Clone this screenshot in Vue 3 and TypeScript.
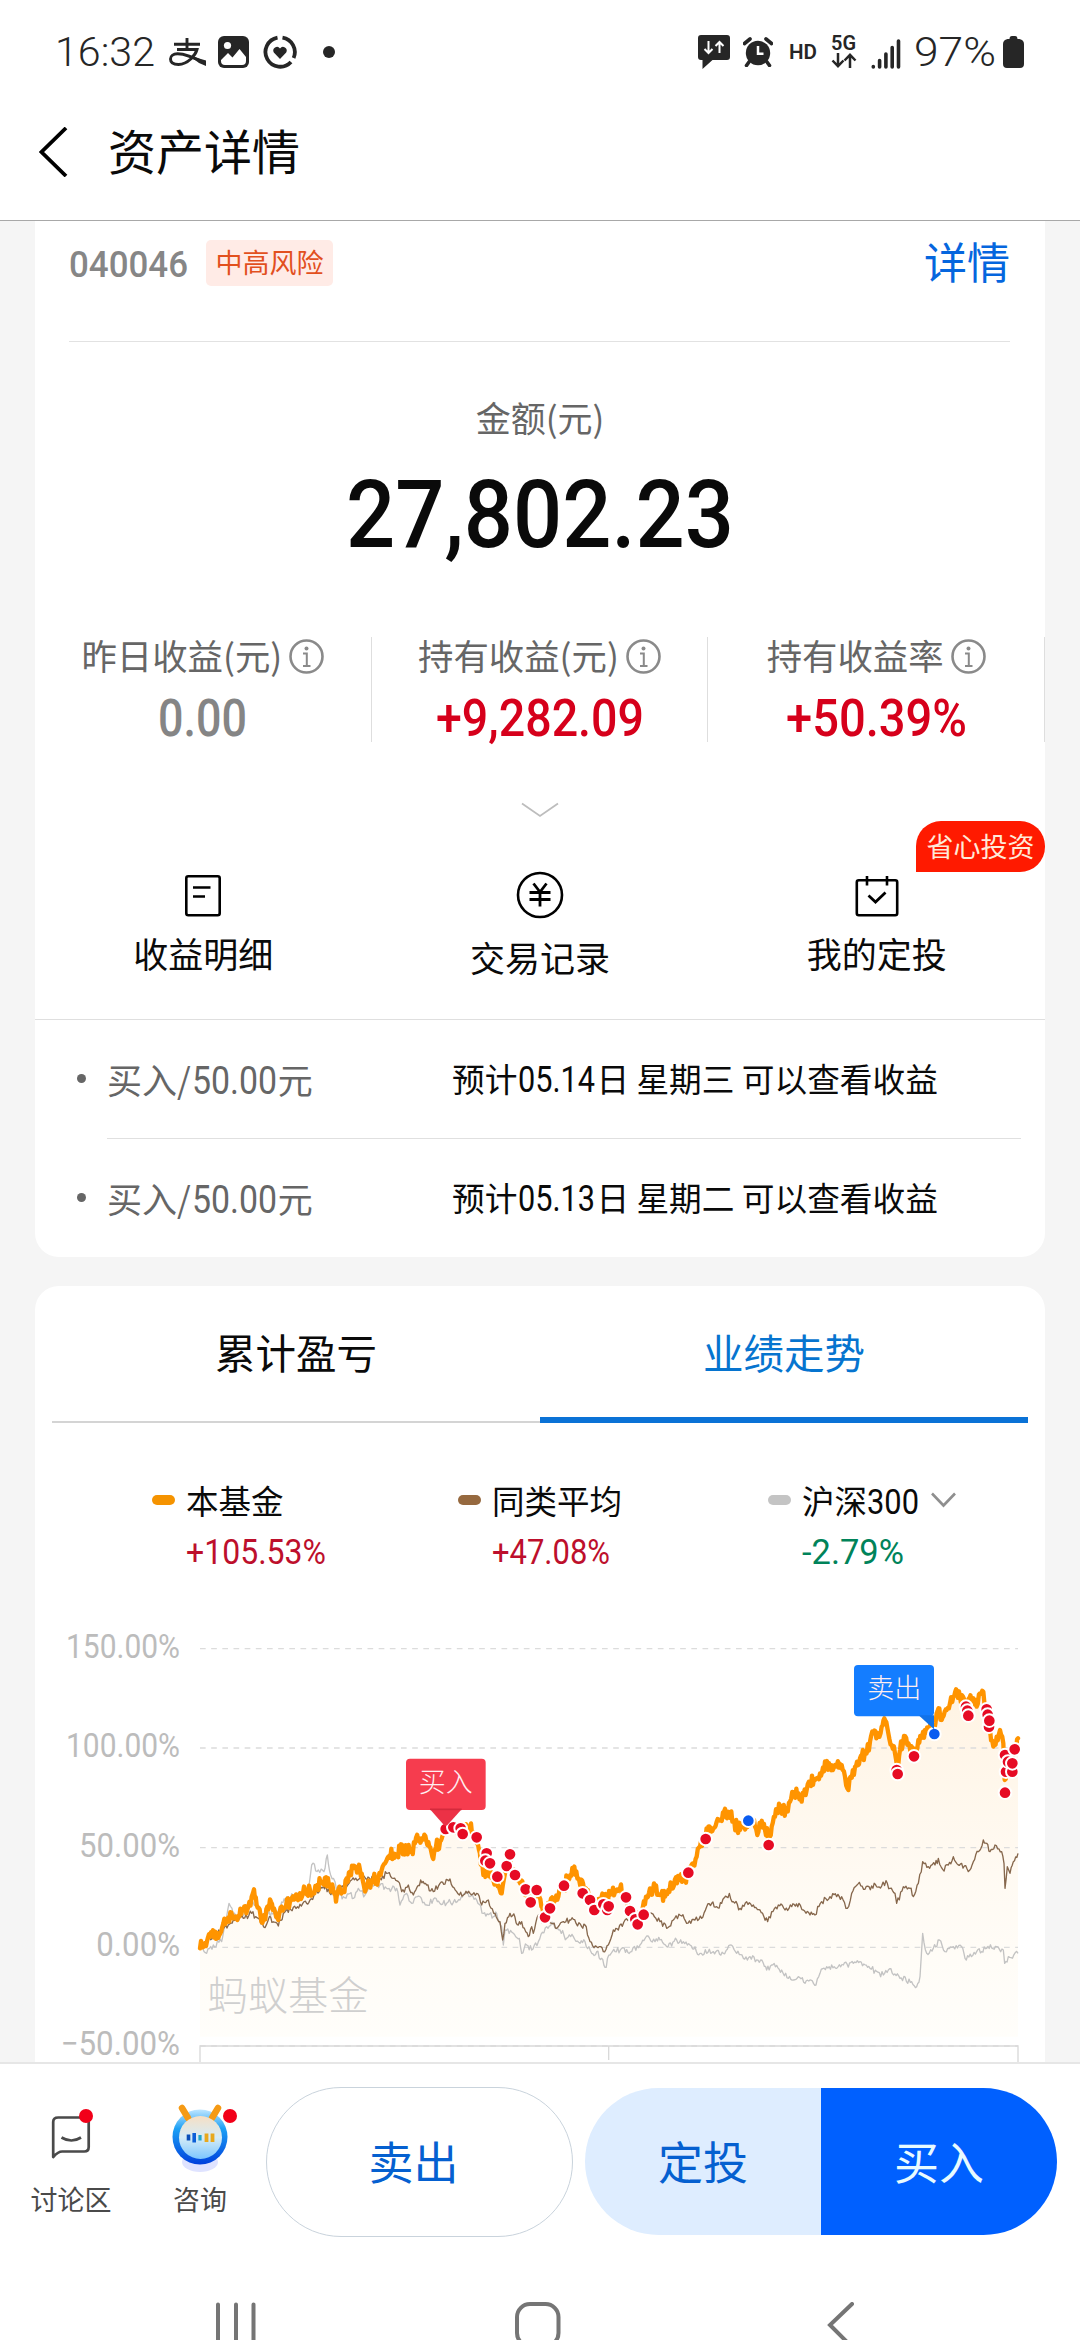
<script setup lang="ts">
import { h, type FunctionalComponent } from 'vue'

interface NumProps {
  v: string
  w: number
  cap: number
  weight?: number
}

/* Narrow figures: `cap` is the digit height, `w` the run width; the box bottom is the baseline. */
const Num: FunctionalComponent<NumProps> = (p) =>
  h('svg', { width: p.w, height: p.cap, style: 'overflow:visible;flex:none' }, [
    h(
      'text',
      {
        x: 0,
        y: p.cap,
        textLength: p.w,
        lengthAdjust: 'spacingAndGlyphs',
        'font-size': p.cap / 0.711,
        'font-weight': p.weight ?? 400,
        'font-family': 'Roboto, sans-serif',
        fill: 'currentColor',
      },
      p.v,
    ),
  ])
Num.props = ['v', 'w', 'cap', 'weight']

const stats = [
  { label: '昨日收益(元)', v: '0.00', w: 89, cls: 'flat' },
  { label: '持有收益(元)', v: '+9,282.09', w: 208, cls: 'up' },
  { label: '持有收益率', v: '+50.39%', w: 181, cls: 'up' },
]

const orders = [
  { date: '05.14', day: '星期三' },
  { date: '05.13', day: '星期二' },
]

const legend = [
  { name: '本基金', color: '#f59300', v: '+105.53%', w: 140, cls: 'lup' },
  { name: '同类平均', color: '#96693f', v: '+47.08%', w: 118, cls: 'lup' },
  { name: '沪深', num: '300', color: '#c4c4c4', v: '-2.79%', w: 102, cls: 'ldown' },
]

const axis = [
  { t: '150.00%', y: 56, w: 342 },
  { t: '100.00%', y: 354, w: 342 },
  { t: '50.00%', y: 653, w: 303 },
  { t: '0.00%', y: 952, w: 251 },
  { t: '−50.00%', y: 1248, w: 358 },
]

/* Chart units are thirds of a pixel. */
const fund =
  '60,955 75,940 90,920 105,905 118,915 130,880 145,862 160,865 175,858 190,840 205,830 215,800 222,778 230,825 242,860 250,870 262,830 270,808 282,835 295,870 305,830 318,828 330,815 345,805 360,790 375,785 390,780 400,788 412,765 425,755 438,742 447,770 460,780 468,815 478,770 490,780 500,745 510,725 525,715 540,720 548,750 555,785 562,765 580,750 595,745 605,720 615,700 625,680 640,670 652,675 660,660 680,655 695,660 705,640 718,625 730,628 742,645 757,680 768,650 780,635 788,615 795,590 815,590 840,600 870,590 885,620 897,660 905,700 910,735 925,720 940,750 950,745 965,790 975,730 985,690 1005,735 1030,770 1050,800 1075,790 1090,850 1110,820 1135,800 1150,780 1162,745 1180,715 1195,745 1215,780 1235,820 1250,830 1270,800 1290,795 1320,775 1335,800 1355,845 1370,870 1385,860 1398,800 1410,775 1425,780 1438,795 1455,800 1465,780 1475,765 1488,742 1500,750 1518,758 1525,725 1540,700 1550,680 1560,650 1577,625 1585,590 1600,595 1610,575 1622,570 1632,545 1648,550 1660,575 1680,600 1705,572 1725,590 1732,615 1742,585 1755,600 1767,620 1775,590 1785,560 1800,530 1820,545 1830,515 1840,490 1855,490 1865,515 1880,480 1890,455 1905,450 1920,430 1938,405 1950,418 1965,405 1985,405 1995,440 2002,475 2012,440 2025,410 2040,385 2060,370 2070,335 2080,310 2095,315 2105,290 2113,265 2125,310 2135,345 2145,370 2152,415 2160,360 2172,318 2185,340 2200,375 2215,330 2235,300 2263,300 2270,250 2278,235 2285,270 2300,240 2310,220 2320,200 2328,178 2340,200 2360,225 2380,205 2390,230 2400,190 2410,185 2420,240 2430,300 2440,350 2450,320 2460,300 2470,340 2474,450 2490,400 2500,370 2514,325'
const peers =
  '60,955 100,920 145,885 160,870 175,872 190,865 215,850 235,865 255,893 268,860 295,888 310,850 340,832 380,820 390,810 430,770 460,790 500,770 515,750 540,745 600,745 620,730 640,745 655,755 665,785 685,765 700,795 722,750 740,765 760,785 780,760 810,747 830,785 850,795 870,790 890,790 905,825 925,810 945,850 960,875 968,930 975,880 990,850 1005,862 1015,885 1025,875 1045,920 1055,890 1060,910 1075,855 1095,880 1115,880 1130,895 1150,875 1180,868 1205,890 1215,885 1230,935 1250,950 1270,965 1285,945 1300,900 1315,900 1335,870 1360,850 1390,865 1415,850 1440,875 1460,895 1480,870 1505,858 1520,880 1545,870 1565,865 1580,830 1595,820 1610,830 1625,820 1648,790 1660,815 1680,835 1700,815 1720,825 1740,840 1763,875 1775,845 1795,825 1815,840 1835,830 1857,820 1870,840 1890,855 1905,855 1925,815 1950,800 1970,800 1985,800 2002,835 2015,790 2038,757 2055,778 2075,768 2105,768 2118,752 2130,775 2145,790 2150,820 2170,770 2190,775 2200,800 2215,760 2228,695 2245,710 2265,705 2275,685 2288,718 2305,705 2320,680 2335,705 2345,700 2365,725 2380,695 2395,665 2410,630 2420,640 2430,665 2445,645 2465,665 2472,700 2475,775 2482,710 2490,730 2500,695 2514,670'
const index =
  '60,955 80,970 100,945 125,935 135,880 147,820 160,855 175,860 200,845 215,805 240,850 290,850 320,800 370,790 388,760 395,705 415,720 432,725 442,675 452,735 465,755 475,790 490,800 510,790 520,805 535,775 555,795 575,765 600,765 620,775 650,775 660,825 680,790 695,820 720,800 740,825 760,808 800,820 840,810 855,790 890,810 910,850 940,860 950,850 965,890 970,945 975,900 1000,910 1018,925 1025,970 1040,945 1055,960 1075,935 1100,890 1120,880 1140,900 1160,925 1180,920 1200,940 1215,935 1235,970 1250,965 1265,985 1275,1012 1290,975 1305,965 1325,955 1355,965 1380,945 1400,918 1425,935 1440,930 1460,950 1490,930 1510,935 1530,945 1560,970 1600,965 1630,970 1650,945 1670,970 1690,985 1710,980 1730,990 1750,1000 1760,1020 1775,1005 1805,1020 1825,1045 1840,1050 1855,1040 1875,1060 1890,1050 1908,1065 1920,1030 1940,1010 1970,1015 1990,1005 2020,1000 2040,995 2070,1015 2110,1035 2125,1020 2160,1045 2195,1055 2210,1070 2220,1040 2228,910 2240,970 2260,955 2278,930 2295,965 2320,950 2345,950 2355,985 2390,965 2420,955 2450,950 2470,960 2474,1000 2485,980 2514,970'

function daily(points: string, step: number, swing: number, seed: number): string {
  const p = points.split(' ').map((s) => s.split(',').map(Number))
  let s = seed
  const rnd = () => {
    s = (s * 16807) % 2147483647
    return s / 2147483647 - 0.5
  }
  const out: string[] = []
  for (let i = 0; i < p.length - 1; i++) {
    const [x0, y0] = p[i]
    const [x1, y1] = p[i + 1]
    const n = Math.max(1, Math.round((x1 - x0) / step))
    for (let k = 0; k < n; k++) {
      const j = k === 0 ? 0 : rnd() * swing
      out.push(`${(x0 + ((x1 - x0) * k) / n).toFixed(1)},${(y0 + ((y1 - y0) * k) / n + j).toFixed(1)}`)
    }
  }
  out.push(p[p.length - 1].join(','))
  return out.join(' ')
}

const fundLine = daily(fund, 3, 38, 71)
const peerLine = daily(peers, 4, 19, 23)
const indexLine = daily(index, 4, 19, 47)
const area = `60,1220 ${fundLine} 2514,1220`

const buys: [number, number][] = [
  [797, 597], [820, 592], [842, 595], [848, 612], [890, 622], [920, 670], [916, 692], [930, 700],
  [980, 708], [952, 740], [990, 673], [1005, 735], [1037, 778], [1070, 780], [1052, 817],
  [1095, 862], [1110, 835], [1152, 767], [1208, 790], [1230, 810], [1243, 840], [1270, 823],
  [1282, 840], [1286, 829], [1338, 802], [1350, 843], [1366, 868], [1373, 883], [1391, 854],
  [1525, 728], [1577, 627], [1766, 645], [2150, 420], [2153, 432], [2202, 379], [2358, 230],
  [2362, 242], [2365, 257], [2420, 238], [2423, 254], [2427, 290], [2428, 272], [2475, 375],
  [2478, 425], [2497, 425], [2484, 395], [2497, 400], [2504, 358], [2475, 488],
]
const sells: [number, number][] = [[1705, 572], [2263, 312]]
</script>

<template>
  <div class="page">
    <div class="status">
      <Num class="clock" v="16:32" :w="100" :cap="29" :weight="300" />
      <svg class="s-pay" width="38" height="28" viewBox="0 0 38 28">
        <path d="M5 6.2H31M18 0V11M8 11.5H28C26.5 17 19 26.5 9.5 26.5C4 26.5 1.5 24 1.5 21C1.5 18 4 15.8 8.5 15.8C16 15.8 27 20.5 36.5 25.5" fill="none" stroke="#262626" stroke-width="2.9" />
        <path d="M20 17.5L37 22.5V28L30 25Z" fill="#262626" />
      </svg>
      <svg class="s-img" width="31" height="32" viewBox="0 0 31 32">
        <rect width="31" height="32" rx="6" fill="#262626" />
        <circle cx="9.5" cy="9.5" r="3.6" fill="#fff" />
        <path d="M3 24L10 17L14.5 21.5L21.5 13L28 21V25Q28 29 24 29H7Q3 29 3 25Z" fill="#fff" />
      </svg>
      <svg class="s-heart" width="34" height="34" viewBox="0 0 34 34">
        <g fill="none" stroke="#262626" stroke-width="3.8">
          <path d="M14.5 2.6A14.7 14.7 0 1 0 28 27" />
          <path d="M19.5 2.6A14.7 14.7 0 0 1 30.6 23" />
        </g>
        <path d="M17 24L10.8 17.4A3.7 3.7 0 0 1 17 13.4A3.7 3.7 0 0 1 23.2 17.4Z" fill="#262626" />
      </svg>
      <i class="s-dot"></i>
      <span class="grow"></span>
      <svg width="32" height="34" viewBox="0 0 32 34">
        <path d="M3 0H29Q32 0 32 3V22Q32 25 29 25H14.5L4.5 34V25H3Q0 25 0 22V3Q0 0 3 0Z" fill="#262626" />
        <path d="M10.5 6V18M6.5 14L10.5 18L14.5 14M21.5 18V7M17.5 11L21.5 7L25.5 11" fill="none" stroke="#fff" stroke-width="2" />
      </svg>
      <svg class="s-alarm" width="30" height="30" viewBox="0 0 30 30">
        <circle cx="15" cy="16" r="12.2" fill="#262626" />
        <path d="M1.5 6.5L7 2M28.5 6.5L23 2M6 25L3.5 28.5M24 25L26.5 28.5" stroke="#262626" stroke-width="3.6" stroke-linecap="round" />
        <path d="M15 9V16.7H20.5" fill="none" stroke="#fff" stroke-width="2.5" />
      </svg>
      <Num class="s-hd" v="HD" :w="28" :cap="14.5" :weight="600" />
      <div class="s-5g">
        <Num v="5G" :w="25" :cap="14.5" :weight="600" />
        <svg width="26" height="15" viewBox="0 0 26 15">
          <path d="M7 0V13M1.5 7.5L7 13.2L12.5 7.5M19 15V2M13.5 7.5L19 1.8L24.5 7.5" fill="none" stroke="#262626" stroke-width="2.5" />
        </svg>
      </div>
      <svg class="s-sig" width="30" height="30" viewBox="0 0 30 30">
        <path d="M2.3 27.5V28M8.6 21.5V28M14.9 15V28M21.2 8.5V28M27.5 2V28" stroke="#262626" stroke-width="3.6" stroke-linecap="round" />
      </svg>
      <Num class="s-pct" v="97%" :w="82" :cap="29" :weight="300" />
      <svg class="s-bat" width="21" height="32" viewBox="0 0 21 32">
        <path d="M6.5 3Q6.5 0 9 0H12Q14.5 0 14.5 3H16.5Q21 4 21 8V28Q21 32 17 32H4Q0 32 0 28V8Q0 4 4.5 3Z" fill="#262626" />
      </svg>
    </div>

    <div class="header">
      <svg width="29" height="50" viewBox="0 0 29 50"><path d="M27 1L2.5 25L27 49" fill="none" stroke="#000" stroke-width="3.8" /></svg>
      <span>资产详情</span>
    </div>

    <main>
      <section class="card asset">
        <div class="fund">
          <Num v="040046" :w="119" :cap="26.5" :weight="500" />
          <span class="risk">中高风险</span>
          <span class="grow"></span>
          <a>详情</a>
        </div>

        <div class="amount">
          <span>金额(元)</span>
          <Num v="27,802.23" :w="388" :cap="67" :weight="500" />
        </div>

        <div class="stats">
          <div v-for="s in stats" :key="s.label" class="stat">
            <div class="stat-label">
              {{ s.label }}
              <svg width="35" height="35" viewBox="0 0 35 35">
                <circle cx="17.5" cy="17.5" r="16" fill="none" stroke="#8a8a8a" stroke-width="2.6" />
                <circle cx="17.5" cy="9.5" r="2" fill="#8a8a8a" />
                <path d="M14 14.5H17.8V26.5M14 27H21.5" fill="none" stroke="#8a8a8a" stroke-width="2" />
              </svg>
            </div>
            <Num :class="s.cls" :v="s.v" :w="s.w" :cap="36.5" :weight="500" />
          </div>
        </div>

        <svg class="more" width="38" height="16" viewBox="0 0 38 16"><path d="M1 1.5L19 14L37 1.5" fill="none" stroke="#bdbdbd" stroke-width="1.8" /></svg>

        <div class="actions">
          <div class="action">
            <svg width="46" height="46" viewBox="0 0 46 46" fill="none" stroke="#000">
              <rect x="6.3" y="4.3" width="33.4" height="38.9" rx="2" stroke-width="2.6" />
              <path d="M13 15.5H30.5M13 24.5H25" stroke-width="2.7" />
            </svg>
            <span>收益明细</span>
          </div>
          <div class="action mid">
            <svg width="48" height="48" viewBox="0 0 48 48" fill="none" stroke="#000">
              <circle cx="24" cy="24" r="22" stroke-width="2.6" />
              <path d="M17.5 12.5L24 21L30.5 12.5M13.5 21.5H34.5M13.5 28.5H34.5M24 21V35.5" stroke-width="2.8" />
            </svg>
            <span>交易记录</span>
          </div>
          <div class="action">
            <svg width="46" height="46" viewBox="0 0 46 46" fill="none" stroke="#000">
              <rect x="2.8" y="8.3" width="40.4" height="34.9" rx="2" stroke-width="2.6" />
              <path d="M13 4V13.5M33 4V13.5" stroke-width="2.6" />
              <path d="M14.5 23.5L21.5 30L31.5 20.5" stroke-width="2.8" />
            </svg>
            <span>我的定投</span>
            <b class="badge">省心投资</b>
          </div>
        </div>

        <div v-for="o in orders" :key="o.date" class="order">
          <i></i>
          <div class="order-body">
            <span class="order-amt">买入/<Num class="fig" v="50.00" :w="85" :cap="28" />元</span>
            <span class="order-note">预计<Num class="fig" :v="o.date" :w="77" :cap="26" />日 {{ o.day }} 可以查看收益</span>
          </div>
        </div>
      </section>

      <section class="card trend">
        <div class="tabs">
          <div class="tab">累计盈亏</div>
          <div class="tab on">业绩走势</div>
        </div>

        <div class="legend">
          <div v-for="l in legend" :key="l.name" class="item">
            <i :style="{ background: l.color }"></i>
            <div>
              <div class="name">
                {{ l.name }}<Num v-if="l.num" :v="l.num" :w="52" :cap="25" />
                <svg v-if="l.num" class="drop" width="25" height="16" viewBox="0 0 25 16"><path d="M1 1.5L12.5 13.5L24 1.5" fill="none" stroke="#8f8f8f" stroke-width="2.6" /></svg>
              </div>
              <Num :class="l.cls" :v="l.v" :w="l.w" :cap="25" />
            </div>
          </div>
        </div>

        <svg class="chart" width="1010" height="442" viewBox="-435 -30 3030 1326">
          <defs>
            <linearGradient id="glow" x1="0" y1="180" x2="0" y2="1220" gradientUnits="userSpaceOnUse">
              <stop offset="0" stop-color="#ff9400" stop-opacity="0.11" />
              <stop offset="0.55" stop-color="#ffae30" stop-opacity="0.06" />
              <stop offset="1" stop-color="#ffd060" stop-opacity="0.03" />
            </linearGradient>
          </defs>
          <polygon :points="area" fill="url(#glow)" />
          <g v-for="a in axis" :key="a.t">
            <text :x="-a.w" :y="a.y + 27" :textLength="a.w" lengthAdjust="spacingAndGlyphs" class="axis">{{ a.t }}</text>
            <path :d="`M60 ${a.y}H2514`" stroke="#dcdcdc" stroke-width="4" stroke-dasharray="17 16.5" />
          </g>
          <path d="M60 1296V1248H2514V1296M1286 1248V1290" fill="none" stroke="#d9d9d9" stroke-width="4" />
          <text x="82" y="1140" class="mark">蚂蚁基金</text>
          <polyline :points="indexLine" fill="none" stroke="#c3c3c3" stroke-width="4" stroke-linejoin="round" />
          <polyline :points="peerLine" fill="none" stroke="#86674c" stroke-width="4" stroke-linejoin="round" />
          <polyline :points="fundLine" fill="none" stroke="#ff9400" stroke-width="13" stroke-linejoin="round" stroke-linecap="round" />
          <circle v-for="(b, i) in buys" :key="'b' + i" :cx="b[0]" :cy="b[1]" r="19" fill="#e60b24" stroke="#fff" stroke-width="6" />
          <circle v-for="(b, i) in sells" :key="'s' + i" :cx="b[0]" :cy="b[1]" r="19" fill="#0a5cf0" stroke="#fff" stroke-width="6" />
          <rect x="678" y="386" width="239" height="154" rx="12" fill="#f63c4e" />
          <path d="M750 538H845L803 584Q797 590 791 584Z" fill="#ec3146" />
          <path d="M750 538H845" stroke="#d42a3c" stroke-width="5" />
          <text x="716" y="485" class="tip">买入</text>
          <rect x="2022" y="105" width="240" height="154" rx="12" fill="#147dff" />
          <path d="M2216 256H2262V298Z" fill="#1272e8" />
          <text x="2062" y="205" class="tip">卖出</text>
        </svg>
      </section>
    </main>

    <footer class="bar">
      <div class="entry">
        <svg width="60" height="72" viewBox="0 0 60 72">
          <path d="M16 17.5H42Q46.5 17.5 46.5 22V47Q46.5 51.5 42 51.5H20Q16 51.5 11 57V22Q11 17.5 16 17.5Z" transform="translate(1.2 0)" fill="none" stroke="#4a4a4a" stroke-width="2.7" stroke-linejoin="round" />
          <path d="M20.5 37.5Q30.5 43.5 40 37.5" fill="none" stroke="#4a4a4a" stroke-width="2.7" />
          <circle cx="45" cy="16" r="7" fill="#f20019" />
        </svg>
        <span>讨论区</span>
      </div>
      <div class="entry bot">
        <svg width="76" height="72" viewBox="0 0 76 72">
          <defs>
            <linearGradient id="ring" x1="0" y1="0" x2="0" y2="1">
              <stop offset="0" stop-color="#bfe6ff" />
              <stop offset="0.35" stop-color="#1ba0f5" />
              <stop offset="1" stop-color="#0040dc" />
            </linearGradient>
            <linearGradient id="face" x1="0" y1="0" x2="0" y2="1">
              <stop offset="0" stop-color="#f6dfc4" />
              <stop offset="0.5" stop-color="#d5ecf7" />
              <stop offset="1" stop-color="#7cc6ff" />
            </linearGradient>
          </defs>
          <ellipse cx="38" cy="62" rx="18" ry="10" fill="#dfe3ff" />
          <circle cx="38" cy="37" r="27.5" fill="url(#ring)" />
          <path d="M20 8L26 18M56 8L50 18" stroke="#f59a14" stroke-width="6.5" stroke-linecap="round" />
          <ellipse cx="38.5" cy="37.5" rx="21.5" ry="21.5" fill="url(#face)" />
          <path d="M26.5 34.5V40.5" stroke="#0b4fb8" stroke-width="3.6" />
          <path d="M32.2 33V42.5" stroke="#0b5fd8" stroke-width="3.6" />
          <path d="M38 35V40.5" stroke="#22a6c8" stroke-width="3.2" />
          <path d="M44.5 33.5V42M50.5 33.5V42" stroke="#e8a81c" stroke-width="3.8" />
          <circle cx="68" cy="16" r="7" fill="#f20019" />
        </svg>
        <span>咨询</span>
      </div>
      <button class="sell">卖出</button>
      <button class="plan">定投</button>
      <button class="buy">买入</button>
    </footer>

    <nav>
      <svg width="42" height="38" viewBox="0 0 42 38"><path d="M3 2.5V38M21 2.5V38M38.5 2.5V38" stroke="#757575" stroke-width="4" stroke-linecap="round" /></svg>
      <svg width="46" height="38" viewBox="0 0 46 38"><rect x="2" y="2" width="41.5" height="42" rx="13" fill="none" stroke="#757575" stroke-width="4" /></svg>
      <svg width="28" height="38" viewBox="0 0 28 38"><path d="M25 2L3 23L20 40" fill="none" stroke="#757575" stroke-width="4" stroke-linecap="round" /></svg>
    </nav>
  </div>
</template>

<style>
body {
  background: #fff;
  overflow: hidden;
}
</style>

<style scoped>
.page {
  width: 1080px;
  height: 2340px;
  overflow: hidden;
  display: flex;
  flex-direction: column;
  background: #fff;
  color: #0a0a0a;
  font-family: 'Noto Sans CJK SC', sans-serif;
}
.page * {
  box-sizing: border-box;
}
.grow {
  flex: 1;
}
svg {
  flex: none;
}

.status {
  height: 103px;
  display: flex;
  align-items: center;
  padding: 0 56px 0 55px;
  color: #262626;
}
.s-pay { margin-left: 14px; }
.s-img { margin-left: 11px; }
.s-heart { margin-left: 14px; }
.s-dot {
  width: 12px;
  height: 12px;
  margin-left: 26px;
  border-radius: 50%;
  background: #262626;
}
.s-alarm { margin-left: 13px; }
.s-hd { margin-left: 16px; }
.s-5g {
  display: flex;
  flex-direction: column;
  gap: 4px;
  margin-left: 14px;
}
.s-sig { margin: 4px 0 0 14px; }
.s-pct { margin-left: 13px; }
.s-bat { margin-left: 7px; }

.header {
  height: 118px;
  display: flex;
  align-items: center;
  gap: 40px;
  padding: 0 0 20px 39px;
  border-bottom: 1px solid #a8a8a8;
  font-size: 48px;
}
.header span {
  line-height: 60px;
  margin-top: -6px;
}

main {
  height: 1841px;
  overflow: hidden;
  padding: 0 35px;
  background: #f5f5f5;
}
.card {
  background: #fff;
}
.asset {
  height: 1036px;
  border-radius: 0 0 24px 24px;
}
.fund {
  height: 121px;
  margin: 0 35px 0 34px;
  padding-bottom: 36px;
  border-bottom: 1px solid #e2e2e2;
  display: flex;
  align-items: center;
  color: #868686;
}
.risk {
  width: 127px;
  height: 46px;
  margin-left: 18px;
  border-radius: 5px;
  background: #ffebe6;
  color: #e2501e;
  font-size: 27px;
  line-height: 44px;
  text-align: center;
}
.fund a {
  font-size: 43px;
  line-height: 60px;
  margin-top: -7px;
  color: #0566de;
}
.amount {
  padding-top: 55px;
  display: flex;
  flex-direction: column;
  align-items: center;
  gap: 43px;
  font-size: 35px;
  line-height: 40px;
}
.amount span {
  color: #666;
}
.stats {
  margin-top: 90px;
  height: 105px;
  display: flex;
}
.stat {
  flex: 1;
  border-right: 1px solid #dedede;
  display: flex;
  flex-direction: column;
  align-items: center;
}
.stat-label {
  display: flex;
  align-items: center;
  gap: 7px;
  height: 36px;
  margin-bottom: 26px;
  font-size: 35.4px;
  line-height: 36px;
  color: #666;
  white-space: nowrap;
}
.stat-label svg {
  margin-top: 3px;
}
.flat { color: #858585; }
.up { color: #d6001b; }
.more {
  display: block;
  margin: 60px auto 0;
}
.actions {
  display: flex;
  height: 202px;
  padding-top: 54px;
  border-bottom: 1px solid #dfdfdf;
}
.action {
  position: relative;
  flex: 1;
  display: flex;
  flex-direction: column;
  align-items: center;
  gap: 15px;
  font-size: 35px;
  line-height: 40px;
}
.action.mid {
  gap: 18px;
}
.action.mid svg {
  margin-top: -1px;
}
.badge {
  position: absolute;
  right: 0;
  top: -51px;
  width: 129px;
  height: 51px;
  border-radius: 25px 25px 25px 0;
  background: #ff1a00;
  color: #ffe9d8;
  font-size: 27px;
  font-weight: 400;
  line-height: 50px;
  text-align: center;
}
.order {
  height: 119px;
  display: flex;
  align-items: center;
  padding: 0 24px 0 42px;
}
.order > i {
  width: 9px;
  height: 9px;
  margin-top: -3px;
  border-radius: 50%;
  background: #666;
}
.order-body {
  flex: 1;
  height: 119px;
  margin-left: 21px;
  display: flex;
  align-items: flex-start;
  padding-top: 37px;
  line-height: 44px;
  border-bottom: 1px solid #e0e0e0;
}
.order:last-child .order-body {
  border-color: transparent;
}
.order-amt {
  width: 345px;
  font-size: 35px;
  color: #666;
  white-space: nowrap;
}
.order-note {
  font-size: 32.7px;
  line-height: 42px;
  white-space: nowrap;
}
.fig {
  margin: 0 1px;
}

.trend {
  height: 900px;
  margin-top: 29px;
  border-radius: 24px 24px 0 0;
}
.tabs {
  height: 137px;
  margin: 0 17px;
  display: flex;
}
.tab {
  flex: 1;
  border-bottom: 2px solid #d4d4d4;
  padding-top: 36px;
  font-size: 40.5px;
  line-height: 60px;
  text-align: center;
}
.tab.on {
  border-bottom: 6px solid #0a72d6;
  color: #0674cf;
}
.legend {
  display: grid;
  grid-template-columns: 306px 310px 1fr;
  padding: 57px 0 0 117px;
}
.item {
  display: flex;
  gap: 11px;
}
.item > i {
  width: 23px;
  height: 10px;
  margin-top: 15px;
  border-radius: 5px;
}
.name {
  height: 40px;
  margin-bottom: 19px;
  font-size: 32.5px;
  line-height: 40px;
  white-space: nowrap;
}
.item svg {
  vertical-align: baseline;
}
.item > div > svg {
  display: block;
}
.drop {
  margin-left: 12px;
  position: relative;
  top: -6px;
}
.lup { color: #bd0f2c; }
.ldown { color: #00835a; }
.chart {
  display: block;
  margin-top: 56px;
}
.axis {
  font: 400 98px Roboto, sans-serif;
  fill: #bcbcbc;
}
.mark {
  font-size: 121px;
  font-weight: 300;
  fill: #cfcfcf;
}
.tip {
  font-size: 81px;
  font-weight: 300;
  fill: #ffeef0;
}

.bar {
  height: 240px;
  border-top: 2px solid #e6e6e6;
  display: flex;
  padding-top: 23px;
}
.entry {
  width: 142px;
  padding-top: 13px;
  display: flex;
  flex-direction: column;
  align-items: center;
  font-size: 27px;
  line-height: 36px;
  color: #4a4a4a;
}
.entry span {
  margin-top: 9px;
}
.entry.bot {
  width: 116px;
}
button {
  height: 147px;
  margin-top: 1px;
  padding: 0 0 3px;
  border: 0;
  font: 400 45px 'Noto Sans CJK SC', sans-serif;
}
.sell {
  width: 307px;
  height: 150px;
  margin: 0 12px 0 8px;
  padding-right: 12px;
  border: 1px solid #c9d3dc;
  border-radius: 75px;
  background: #fff;
  color: #0560d0;
}
.plan {
  width: 236px;
  border-radius: 74px 0 0 74px;
  background: #deedff;
  color: #0560d0;
}
.buy {
  width: 236px;
  border-radius: 0 74px 74px 0;
  background: #0060ff;
  color: #e8fbff;
}

nav {
  display: flex;
  height: 38px;
  padding-left: 215px;
}
nav svg:nth-child(2) { margin-left: 258px; }
nav svg:nth-child(3) { margin-left: 266px; }
</style>
